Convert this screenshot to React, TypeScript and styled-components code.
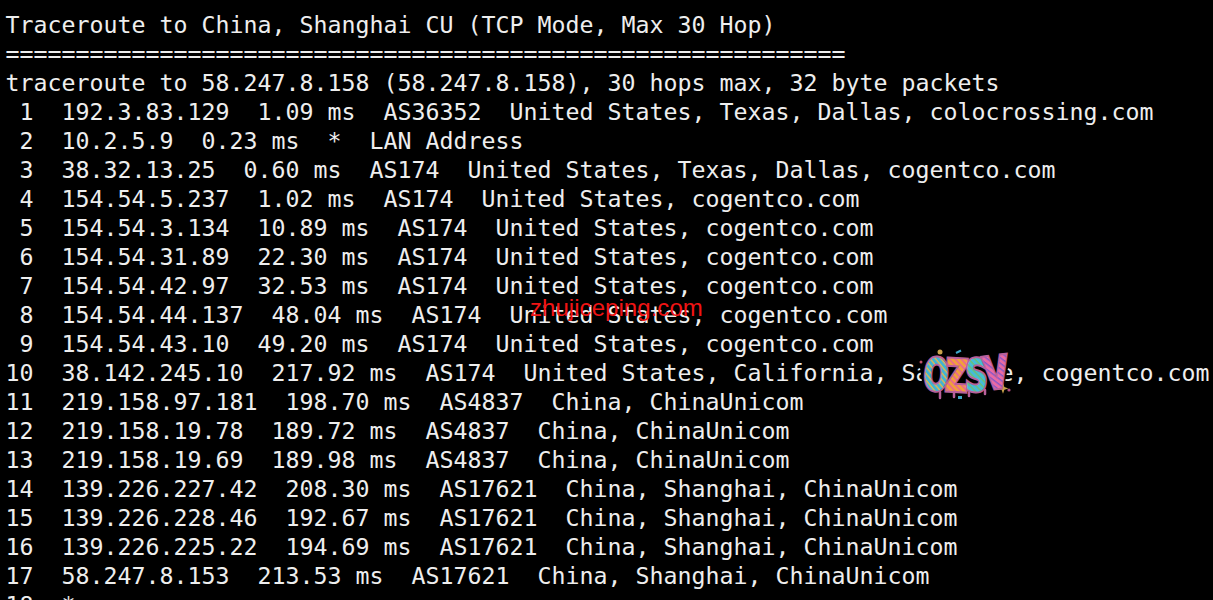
import React from "react";
import styled, { createGlobalStyle } from "styled-components";

const Global = createGlobalStyle`
  html, body { margin: 0; padding: 0; background: #000; overflow: hidden; }
`;

const Terminal = styled.div`
  position: relative;
  width: 1213px;
  height: 600px;
  overflow: hidden;
  background: #000;
  padding: 10px 0 0 5.6px;
  box-sizing: border-box;
`;

const Line = styled.div`
  font-family: "DejaVu Sans Mono", "Liberation Mono", monospace;
  font-size: 23.25px;
  line-height: 29px;
  height: 29px;
  white-space: pre;
  color: #eeeeee;
`;

const Watermark = styled.div`
  position: absolute;
  left: 530px;
  top: 294px;
  font-family: "Liberation Sans", Arial, sans-serif;
  font-size: 24px;
  line-height: 28px;
  letter-spacing: 0.05px;
  color: #f01414;
`;

const Logo = styled.svg`
  position: absolute;
  left: 915px;
  top: 346px;
`;

const lines = [
  "Traceroute to China, Shanghai CU (TCP Mode, Max 30 Hop)",
  "============================================================",
  "traceroute to 58.247.8.158 (58.247.8.158), 30 hops max, 32 byte packets",
  " 1  192.3.83.129  1.09 ms  AS36352  United States, Texas, Dallas, colocrossing.com",
  " 2  10.2.5.9  0.23 ms  *  LAN Address",
  " 3  38.32.13.25  0.60 ms  AS174  United States, Texas, Dallas, cogentco.com",
  " 4  154.54.5.237  1.02 ms  AS174  United States, cogentco.com",
  " 5  154.54.3.134  10.89 ms  AS174  United States, cogentco.com",
  " 6  154.54.31.89  22.30 ms  AS174  United States, cogentco.com",
  " 7  154.54.42.97  32.53 ms  AS174  United States, cogentco.com",
  " 8  154.54.44.137  48.04 ms  AS174  United States, cogentco.com",
  " 9  154.54.43.10  49.20 ms  AS174  United States, cogentco.com",
  "10  38.142.245.10  217.92 ms  AS174  United States, California, San Jose, cogentco.com",
  "11  219.158.97.181  198.70 ms  AS4837  China, ChinaUnicom",
  "12  219.158.19.78  189.72 ms  AS4837  China, ChinaUnicom",
  "13  219.158.19.69  189.98 ms  AS4837  China, ChinaUnicom",
  "14  139.226.227.42  208.30 ms  AS17621  China, Shanghai, ChinaUnicom",
  "15  139.226.228.46  192.67 ms  AS17621  China, Shanghai, ChinaUnicom",
  "16  139.226.225.22  194.69 ms  AS17621  China, Shanghai, ChinaUnicom",
  "17  58.247.8.153  213.53 ms  AS17621  China, Shanghai, ChinaUnicom",
  "18  *",
];

const stripes = [
  { id: "ozsvO", base: "#3fb4d6", mark: "#e6b84a" },
  { id: "ozsvZ", base: "#f0a03c", mark: "#e8609c" },
  { id: "ozsvS", base: "#45bcd8", mark: "#6cc070" },
  { id: "ozsvV", base: "#ea6aa4", mark: "#8458c8" },
];

const letters = [
  { c: "O", x: 20, y: 44, r: 4, sx: 0.66 },
  { c: "Z", x: 41, y: 45, r: 3, sx: 0.72 },
  { c: "S", x: 61, y: 45, r: 2, sx: 0.72 },
  { c: "V", x: 83, y: 42, r: -7, sx: 0.72 },
];

export default function App() {
  return (
    <Terminal>
      <Global />
      {lines.map((l, i) => (
        <Line key={i}>{l}</Line>
      ))}
      <Watermark>zhujiceping.com</Watermark>
      <Logo width="100" height="60" viewBox="0 0 100 60">
        <defs>
          {stripes.map((s) => (
            <pattern
              key={s.id}
              id={s.id}
              width="5"
              height="5"
              patternUnits="userSpaceOnUse"
              patternTransform="rotate(35)"
            >
              <rect width="5" height="5" fill={s.base} />
              <rect width="5" height="1.6" fill={s.mark} />
            </pattern>
          ))}
        </defs>
        <path d="M5 22 L20 10 L60 14 L96 8 L90 36 L72 45 L52 46 L40 48 L16 46 L7 36 Z" fill="#000" />
        <circle cx="25" cy="6" r="2.5" fill="#c9a24a" />
        <circle cx="6" cy="16" r="1.5" fill="#c0506a" />
        <circle cx="94" cy="44" r="1.6" fill="#b05080" />
        <path d="M41 7 l5 -2.5" stroke="#3fa8c8" strokeWidth="2" />
        <rect x="43" y="50" width="4" height="3" fill="#3fa8c8" />
        <path d="M88 37 l1.4 4 4 1.4 -4 1.4 -1.4 4 -1.4 -4 -4 -1.4 4 -1.4 Z" fill="#c9a24a" />
        <path d="M25 46 v6 M39 47 v4 M54 47 v3 M70 44 v4" stroke="#b8609a" strokeWidth="2.5" strokeLinecap="round" />
        {letters.map((l) => (
          <text
            key={l.c}
            textAnchor="middle"
            fontFamily="'DejaVu Sans', sans-serif"
            fontWeight="bold"
            fontSize="44"
            fill={`url(#ozsv${l.c})`}
            stroke="#b8609a"
            strokeWidth="4"
            paintOrder="stroke"
            transform={`translate(${l.x} ${l.y}) rotate(${l.r}) scale(${l.sx} 1)`}
          >
            {l.c}
          </text>
        ))}
      </Logo>
    </Terminal>
  );
}
